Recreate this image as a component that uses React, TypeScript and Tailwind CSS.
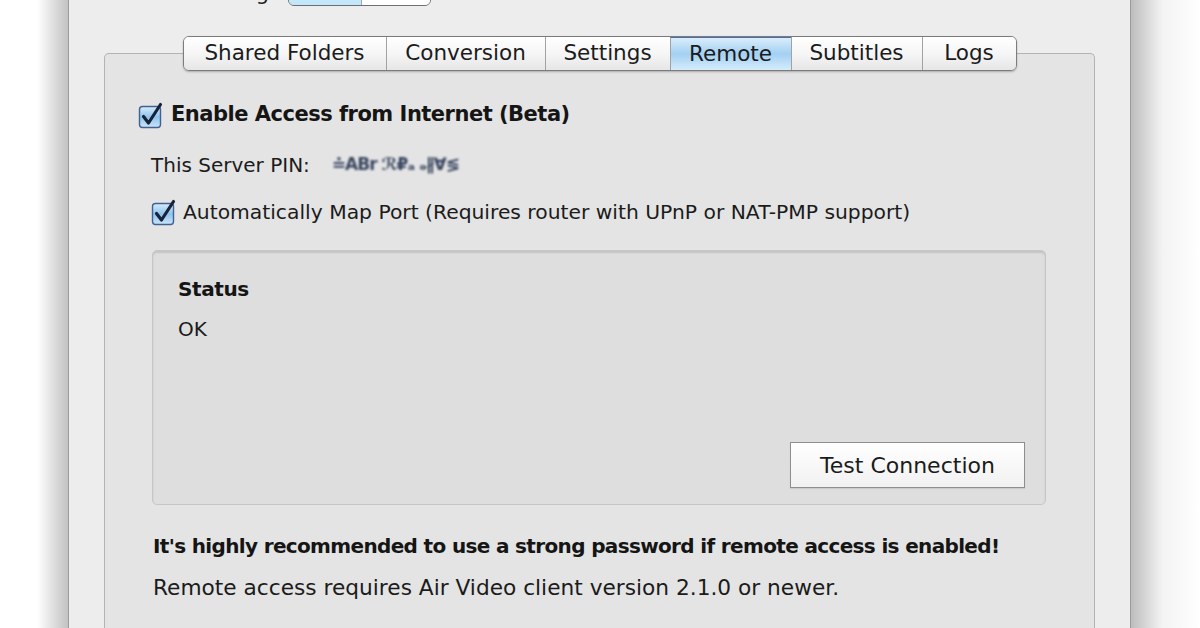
import React from "react";

const font = { fontFamily: '"DejaVu Sans", "Liberation Sans", sans-serif' };

const tabs = [
  { label: "Shared Folders", w: "w-[202px]" },
  { label: "Conversion", w: "w-[159px]" },
  { label: "Settings", w: "w-[125px]" },
  { label: "Remote", w: "w-[121px]", active: true },
  { label: "Subtitles", w: "w-[131px]" },
  { label: "Logs", w: "w-[94px]" },
];

function Checkbox() {
  return (
    <svg width="27" height="27" viewBox="0 0 27 27" className="shrink-0">
      <defs>
        <linearGradient id="cb" x1="0" y1="0" x2="0" y2="1">
          <stop offset="0" stopColor="#d6ecfb" />
          <stop offset="0.5" stopColor="#8fc3ec" />
          <stop offset="1" stopColor="#c9e6fb" />
        </linearGradient>
      </defs>
      <rect x="1.5" y="4.5" width="21" height="21" rx="3" fill="url(#cb)" stroke="#43618f" strokeWidth="1.4" />
      <path d="M5.5 14.5 L10.5 21 L22.5 2.5" fill="none" stroke="#16233a" strokeWidth="3.2" strokeLinecap="round" strokeLinejoin="round" />
    </svg>
  );
}

function TabBar() {
  return (
    <div className="-ml-[33px] -mr-[48px] -mt-[18px] flex justify-center">
      <div className="flex h-[35px] overflow-hidden rounded-[6px] border border-[#7c7c7c] shadow-[0_1px_2px_rgba(0,0,0,0.25)]">
        {tabs.map((t, i) => (
          <div
            key={t.label}
            className={
              (t.active
                ? "bg-gradient-to-b from-[#d9edfb] via-[#a3d0f2] to-[#d5ecfb] border-t border-t-[#4d6fa5] "
                : "bg-gradient-to-b from-white via-[#f6f6f6] to-[#e6e6e6] ") +
              (i > 0 ? "border-l border-l-[#a2a2a2] " : "") +
              t.w +
              " flex items-center justify-center text-[21.5px] text-[#1b1b1b]"
            }
          >
            {t.label}
          </div>
        ))}
      </div>
    </div>
  );
}

export default function App() {
  return (
    <div className="flex h-[628px] w-[1200px] overflow-hidden bg-white" style={font}>
      <div className="w-[68px] shrink-0 bg-gradient-to-r from-white from-55% to-[#c2c2c2]" />

      <div className="relative flex w-[1063px] shrink-0 flex-col border-x border-[#9c9c9c] bg-[#ededed] px-[35px]">
        {/* cut-off control above the tabs */}
        <div className="-mt-[26px] flex h-[32px] items-end">
          <span className="ml-[75px] w-[90px] text-right text-[21px] leading-[26px] text-[#222]">Sharing</span>
          <div className="ml-[19px] flex h-[32px] w-[143px] overflow-hidden rounded-[6px] border border-[#6f6f6f]">
            <div className="w-[72px] bg-gradient-to-b from-[#e3f4fd] to-[#bfe6fb]" />
            <div className="flex-1 border-l border-[#a5a5a5] bg-white" />
          </div>
        </div>

        <div className="mt-[47px] flex flex-1 flex-col rounded-t-[5px] border border-b-0 border-[#b3b3b3] bg-[#e4e4e4] pl-[33px] pr-[48px]">
          <TabBar />

          <div className="mt-[29px] flex h-[30px] items-center gap-[6px]">
            <Checkbox />
            <span className="text-[21px] font-bold tracking-[-0.5px] text-[#151515]">Enable Access from Internet (Beta)</span>
          </div>

          <div className="mt-[20px] flex h-[30px] items-center pl-[13px]">
            <span className="text-[20px] text-[#1b1b1b]">This Server PIN:</span>
            <span className="ml-[22px] select-none text-[17px] font-bold tracking-[-1px] text-[#3a4660] blur-[0.8px]">
              ≐ABr ℛ₽ₐ ₔ∦∀≶
            </span>
          </div>

          <div className="mt-[17px] flex h-[30px] items-center gap-[5px] pl-[13px]">
            <Checkbox />
            <span className="text-[20.3px] text-[#1b1b1b]">
              Automatically Map Port (Requires router with UPnP or NAT-PMP support)
            </span>
          </div>

          <div className="ml-[14px] mt-[23px] flex h-[255px] flex-col rounded-[5px] border border-[#c6c6c6] bg-[#dedede] pb-[16px] pl-[25px] pr-[20px] pt-[24px] shadow-[inset_0_2px_2px_rgba(0,0,0,0.12)]">
            <div className="h-[28px] text-[20px] font-bold leading-[28px] tracking-[-0.4px] text-[#151515]">Status</div>
            <div className="mt-[12px] h-[28px] text-[20px] leading-[28px] text-[#1b1b1b]">OK</div>
            <div className="mt-auto flex justify-end">
              <button className="flex h-[46px] w-[235px] items-center justify-center border border-[#8e8e8e] bg-gradient-to-b from-white to-[#f1f1f1] text-[22px] text-[#1b1b1b] shadow-[0_1px_1px_rgba(0,0,0,0.08)]">
                Test Connection
              </button>
            </div>
          </div>

          <div className="ml-[15px] mt-[26px] flex h-[30px] items-center whitespace-nowrap text-[20px] font-bold tracking-[-0.65px] text-[#151515]">
            It's highly recommended to use a strong password if remote access is enabled!
          </div>
          <div className="ml-[15px] mt-[12px] flex h-[30px] items-center whitespace-nowrap text-[21.7px] text-[#1b1b1b]">
            Remote access requires Air Video client version 2.1.0 or newer.
          </div>
        </div>
      </div>

      <div className="flex-1 bg-gradient-to-r from-[#bdbdbd] via-[#f3f3f3] via-45% to-white" />
    </div>
  );
}
